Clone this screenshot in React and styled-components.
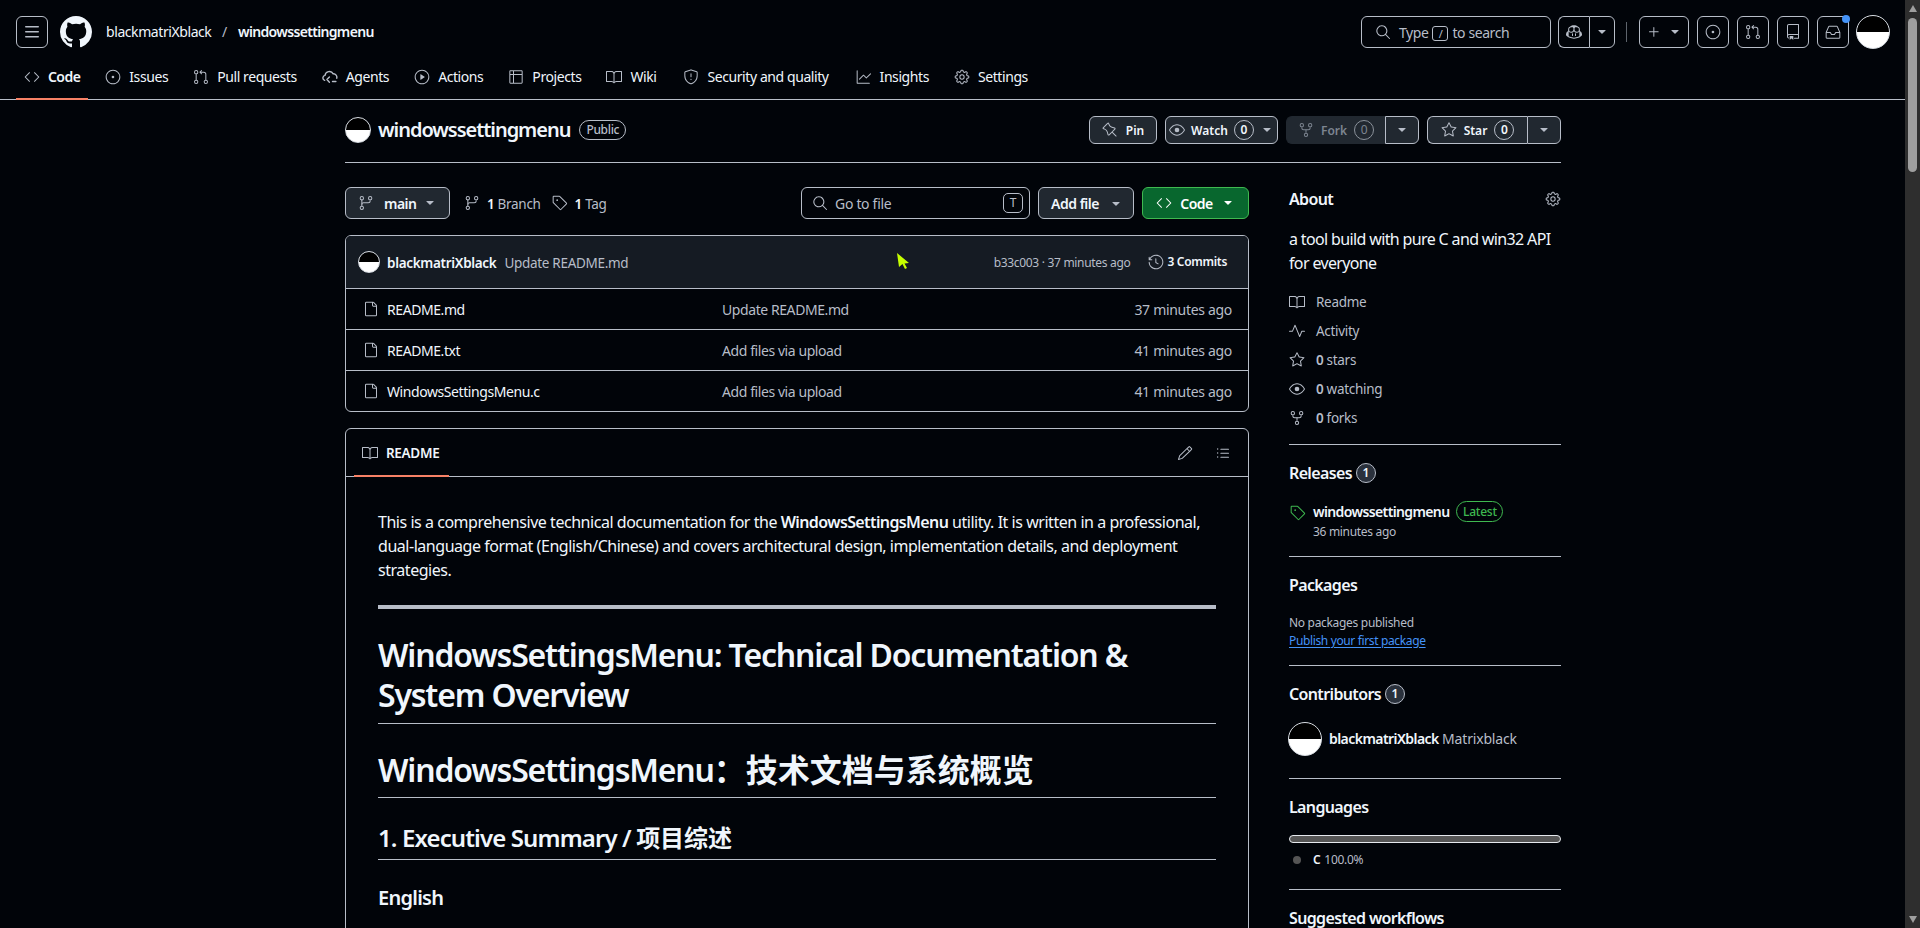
import React from 'react';
import styled, { createGlobalStyle } from 'styled-components';
import {
  GoCode, GoIssueOpened, GoGitPullRequest, GoPlay, GoTable, GoBook,
  GoShield, GoGraph, GoGear, GoSearch, GoCopilot, GoTriangleDown, GoPlus, GoRepo, GoInbox, GoPin,
  GoEye, GoRepoForked, GoStar, GoGitBranch, GoTag, GoHistory, GoFile, GoPencil, GoListUnordered, GoPulse,
} from 'react-icons/go';

const border = '#b7bdc8';
const text = '#f0f6fc';
const muted = '#b7bdc8';
const surface = '#212830';

const GlobalStyle = createGlobalStyle`
  html, body {
    margin: 0;
    height: 100%;
    overflow: hidden;
    background: #010409;
  }
  body {
    font-family: "Noto Sans", "Noto Sans CJK SC", sans-serif;
    font-size: 14px;
    line-height: 20px;
    letter-spacing: -0.022em;
    color: ${text};
  }
  svg { display: block; flex: none; }
`;

const Shell = styled.div`
  display: flex;
  height: 928px;
  overflow: hidden;
`;

const Page = styled.div`
  flex: 1;
  min-width: 0;
  overflow: hidden;
`;

const Scrollbar = styled.div`
  width: 15px;
  flex: none;
  background: #2e2e2e;
  display: flex;
  flex-direction: column;
  align-items: center;
  justify-content: space-between;
  padding: 5px 0;
  box-sizing: border-box;
  position: relative;
`;

const ScrollThumb = styled.div`
  position: absolute;
  top: 18px;
  left: 3px;
  width: 9px;
  height: 154px;
  border-radius: 5px;
  background: #9f9f9f;
`;

const ScrollArrow = styled.div`
  width: 0;
  height: 0;
  border-left: 4.5px solid transparent;
  border-right: 4.5px solid transparent;
  ${p => (p.$down ? 'border-top: 7px solid #9f9f9f;' : 'border-bottom: 7px solid #9f9f9f;')}
`;

const Cursor = styled.svg`
  position: absolute;
  left: 897px;
  top: 253px;
`;

const TopBar = styled.div`
  height: 64px;
  box-sizing: border-box;
  padding: 16px 15px 16px 16px;
  display: flex;
  align-items: center;
`;

const Crumbs = styled.div`
  display: flex;
  align-items: center;
  margin-left: 14px;
  flex: 1;
`;

const CrumbOwner = styled.span`
  width: 116px;
  letter-spacing: -0.03em;
`;

const CrumbSlash = styled.span`
  width: 16px;
  color: ${muted};
`;

const CrumbRepo = styled.span`
  font-weight: 600;
  letter-spacing: -0.048em;
`;

const LogoLink = styled.a`
  display: flex;
  margin-left: 12px;
  color: ${text};
`;

const IconBtn = styled.button`
  height: 32px;
  width: ${p => p.$w || 32}px;
  margin-left: ${p => p.$ml || 0}px;
  box-sizing: border-box;
  padding: 0;
  background: transparent;
  border: 1px solid ${border};
  border-radius: 6px;
  color: ${muted};
  display: flex;
  align-items: center;
  justify-content: center;
  gap: ${p => p.$gap || 0}px;
  position: relative;
  flex: none;
`;

const SearchBox = styled.div`
  width: 190px;
  height: 32px;
  box-sizing: border-box;
  border: 1px solid ${border};
  border-radius: 6px;
  color: ${muted};
  display: flex;
  align-items: center;
  padding-left: 13px;
  gap: 8px;
  flex: none;
`;

const SearchHint = styled.span`
  display: flex;
  align-items: center;
  gap: 4px;
  letter-spacing: -0.03em;
  padding-top: 2px;
`;

const SlashKey = styled.kbd`
  width: 16px;
  height: 15px;
  box-sizing: border-box;
  border: 1px solid ${border};
  border-radius: 3px;
  font: inherit;
  font-size: 11px;
  line-height: 13px;
  text-align: center;
`;

const SplitGroup = styled.div`
  display: flex;
  margin-left: ${p => p.$ml || 0}px;
  flex: none;
`;

const SplitPart = styled.button`
  height: ${p => p.$h || 32}px;
  width: ${p => p.$w}px;
  box-sizing: border-box;
  padding: 0;
  background: ${p => p.$bg || 'transparent'};
  border: 1px solid ${p => p.$borderColor || border};
  color: ${p => p.$color || muted};
  font: inherit;
  font-size: 12px;
  font-weight: 600;
  display: flex;
  align-items: center;
  justify-content: center;
  gap: 7px;
  &:first-child {
    border-radius: 6px 0 0 6px;
    border-right-width: 0;
  }
  &:last-child {
    border-radius: 0 6px 6px 0;
  }
`;

const Divider = styled.span`
  width: 1px;
  height: 20px;
  background: #5e646c;
  margin: 0 12px 0 11px;
  flex: none;
`;

const Dot = styled.span`
  position: absolute;
  top: -2px;
  right: -2px;
  width: 8px;
  height: 8px;
  border-radius: 50%;
  background: #4493f8;
`;

const Avatar = styled.span`
  display: block;
  width: ${p => p.$size}px;
  height: ${p => p.$size}px;
  box-sizing: border-box;
  border-radius: 50%;
  border: 1px solid #d8dde3;
  background: linear-gradient(#000 50%, #fff 50%);
  flex: none;
  margin-left: ${p => p.$ml || 0}px;
`;

const Nav = styled.nav`
  height: 36px;
  box-sizing: border-box;
  border-bottom: 1px solid ${border};
  padding-left: 16px;
  display: flex;
  gap: 9px;
`;

const Tab = styled.a`
  height: 35px;
  box-sizing: border-box;
  padding: 3px 8px 0;
  margin-left: ${p => p.$ml || 0}px;
  display: flex;
  align-items: flex-start;
  gap: 8px;
  color: ${text};
  font-weight: ${p => (p.$active ? 600 : 400)};
  letter-spacing: ${p => (p.$active ? '-0.04em' : '-0.03em')};
  position: relative;
  svg {
    color: ${muted};
    margin-top: 2px;
  }
  ${p => p.$active && `
    &::after {
      content: "";
      position: absolute;
      left: 0;
      right: 0;
      bottom: -1px;
      height: 2px;
      background: #f78166;
    }
  `}
`;

const Container = styled.main`
  width: 1216px;
  margin-left: 345px;
`;

const RepoHead = styled.div`
  height: 63px;
  box-sizing: border-box;
  padding-top: 16px;
  border-bottom: 1px solid ${border};
  display: flex;
  justify-content: space-between;
  align-items: flex-start;
`;

const RepoTitle = styled.div`
  display: flex;
  align-items: center;
  height: 28px;
`;

const RepoName = styled.strong`
  font-size: 20px;
  font-weight: 600;
  letter-spacing: -0.052em;
  margin-left: 7px;
`;

const PublicLabel = styled.span`
  margin-left: 9px;
  height: 20px;
  box-sizing: border-box;
  padding: 0 6px;
  border: 1px solid ${border};
  border-radius: 10px;
  font-size: 12px;
  line-height: 18px;
  font-weight: 500;
  color: ${muted};
`;

const RepoActions = styled.div`
  display: flex;
  gap: 8px;
`;

const ActionBtn = styled.button`
  height: 28px;
  width: ${p => p.$w}px;
  box-sizing: border-box;
  padding: 0;
  background: ${surface};
  border: 1px solid ${border};
  border-radius: 6px;
  color: ${text};
  font: inherit;
  font-size: 12px;
  font-weight: 600;
  display: flex;
  align-items: center;
  justify-content: center;
  gap: ${p => p.$gap || 6}px;
  svg { color: ${muted}; }
`;

const BtnLabel = styled.span`
  padding-top: 2px;
`;

const Counter = styled.span`
  min-width: 20px;
  height: 20px;
  box-sizing: border-box;
  border: 1px solid ${p => (p.$dim ? '#8b929b' : border)};
  border-radius: 10px;
  font-size: 12px;
  line-height: 18px;
  font-weight: ${p => (p.$dim ? 400 : 600)};
  letter-spacing: 0;
  text-align: center;
  color: inherit;
  background: ${p => (p.$fill ? '#2a313c' : 'transparent')};
  display: inline-block;
`;

const Columns = styled.div`
  display: grid;
  grid-template-columns: 904px 272px;
  column-gap: 40px;
  margin-top: 24px;
`;

const BranchRow = styled.div`
  display: flex;
  align-items: center;
  height: 32px;
`;

const BranchBtn = styled.button`
  width: 105px;
  height: 32px;
  box-sizing: border-box;
  background: ${surface};
  border: 1px solid ${border};
  border-radius: 6px;
  color: ${text};
  font: inherit;
  font-weight: 600;
  padding: 0 12px;
  display: flex;
  align-items: center;
  svg { color: ${muted}; }
`;

const BranchName = styled.span`
  margin-left: 10px;
  padding-top: 2px;
  flex: 1;
  text-align: left;
  letter-spacing: -0.04em;
`;

const MetaLink = styled.span`
  display: flex;
  align-items: center;
  color: ${muted};
  font-size: 13.5px;
  margin-left: ${p => p.$ml}px;
  gap: ${p => p.$gap}px;
  svg { color: ${muted}; }
  b { color: ${text}; font-weight: 600; }
`;

const Spacer = styled.span`
  flex: 1;
`;

const FileSearch = styled.div`
  width: 229px;
  height: 32px;
  box-sizing: border-box;
  border: 1px solid ${border};
  border-radius: 6px;
  color: ${muted};
  padding: 0 6px 0 10px;
  display: flex;
  align-items: center;
  gap: 7px;
`;

const KeyT = styled.kbd`
  margin-left: auto;
  width: 20px;
  height: 20px;
  box-sizing: border-box;
  border: 1px solid ${border};
  border-radius: 5px;
  font: inherit;
  font-size: 12px;
  line-height: 18px;
  text-align: center;
`;

const AddFile = styled.button`
  width: 96px;
  height: 32px;
  margin-left: 8px;
  box-sizing: border-box;
  background: ${surface};
  border: 1px solid ${border};
  border-radius: 6px;
  color: ${text};
  font: inherit;
  font-weight: 600;
  letter-spacing: -0.035em;
  padding: 0 0 0 2px;
  display: flex;
  align-items: center;
  justify-content: center;
  gap: 10px;
  svg { color: ${muted}; margin-top: 2px; }
`;

const CodeBtn = styled.button`
  width: 107px;
  height: 32px;
  margin-left: 8px;
  box-sizing: border-box;
  background: #08672e;
  border: 1px solid #3fb950;
  border-radius: 6px;
  color: #fff;
  font: inherit;
  font-weight: 600;
  letter-spacing: -0.04em;
  padding: 0;
  display: flex;
  align-items: center;
  justify-content: center;
  gap: 8px;
`;

const FilesBox = styled.div`
  margin-top: 16px;
  border: 1px solid ${border};
  border-radius: 6px;
  overflow: hidden;
`;

const CommitRow = styled.div`
  height: 53px;
  box-sizing: border-box;
  background: #151b23;
  border-bottom: 1px solid ${border};
  padding: 0 21px 0 12px;
  display: flex;
  align-items: center;
  gap: 5px;
  font-size: 13.5px;
`;

const CommitAuthor = styled.strong`
  font-weight: 600;
  margin-left: 2px;
  padding-top: 2px;
`;

const CommitMsg = styled.span`
  color: ${muted};
  margin-left: 3px;
  padding-top: 2px;
`;

const CommitMeta = styled.span`
  margin-left: auto;
  color: ${muted};
  font-size: 12px;
  padding-top: 2px;
`;

const CommitCount = styled.span`
  display: flex;
  align-items: center;
  gap: 4px;
  font-size: 12px;
  font-weight: 600;
  margin-left: 12px;
  svg { color: ${muted}; }
`;

const FileRow = styled.div`
  height: 40px;
  box-sizing: border-box;
  padding: 0 16px 0 17px;
  display: grid;
  grid-template-columns: 16px 343px 1fr auto;
  align-items: center;
  color: ${muted};
  & + & { border-top: 1px solid ${border}; height: 41px; }
  span { padding-top: 2px; }
`;

const FileName = styled.span`
  color: ${text};
  margin-left: 8px;
  letter-spacing: -0.03em;
`;

const FileCommit = styled.span`
  letter-spacing: -0.03em;
`;

const ReadmeBox = styled.section`
  margin-top: 16px;
  border: 1px solid ${border};
  border-radius: 6px;
`;

const ReadmeBar = styled.div`
  height: 48px;
  box-sizing: border-box;
  border-bottom: 1px solid ${border};
  padding: 0 17px 0 8px;
  display: flex;
  align-items: center;
  color: ${muted};
  gap: 22px;
`;

const ReadmeTab = styled.span`
  margin-right: auto;
  height: 47px;
  box-sizing: border-box;
  padding: 0 8px;
  display: flex;
  align-items: center;
  gap: 8px;
  color: ${text};
  font-weight: 600;
  font-size: 13.5px;
  position: relative;
  width: 95px;
  svg { color: ${muted}; }
  &::after {
    content: "";
    position: absolute;
    left: 0;
    right: 0;
    bottom: -1px;
    height: 2px;
    background: #f78166;
  }
`;

const Markdown = styled.article`
  padding: 33px 32px 32px;
  font-size: 16px;
  line-height: 24px;
  letter-spacing: -0.029em;
  strong { font-weight: 600; letter-spacing: -0.038em; }
  p { margin: 0 0 16px; }
  hr {
    height: 4px;
    margin: 23px 0 24px;
    border: 0;
    background: ${border};
  }
  h1, h2, h3 {
    font-weight: 600;
    margin: 24px 0 16px;
    letter-spacing: -0.037em;
  }
  h1 {
    font-size: 32px;
    line-height: 40px;
    padding: 2px 0 7.6px;
    border-bottom: 1px solid ${border};
  }
  h2 {
    font-size: 24px;
    line-height: 30px;
    padding: 1px 0 6.2px;
    border-bottom: 1px solid ${border};
  }
  h3 {
    font-size: 20px;
    line-height: 25px;
    padding-top: 1px;
  }
`;

const Cjk = styled.span`
  letter-spacing: 0;
`;

const Side = styled.aside`
  min-width: 0;
`;

const SideSection = styled.div`
  padding-top: ${p => (p.$first ? 0 : 16)}px;
  padding-bottom: ${p => p.$pb || 16}px;
  & + & { border-top: 1px solid ${border}; }
`;

const SideTitle = styled.h2`
  margin: 0;
  font-size: 16px;
  font-weight: 600;
  line-height: 24px;
  letter-spacing: -0.04em;
  display: flex;
  align-items: center;
  justify-content: space-between;
  svg { color: ${muted}; }
`;

const TitleRow = styled.div`
  display: flex;
  align-items: center;
  gap: 4px;
  font-size: 16px;
  font-weight: 600;
  line-height: 24px;
  letter-spacing: -0.04em;
`;

const Desc = styled.p`
  margin: 16px 0 17px;
  font-size: 16px;
  line-height: 24px;
  letter-spacing: -0.04em;
`;

const SideLinks = styled.div`
  display: flex;
  flex-direction: column;
  gap: 9px;
`;

const SideLink = styled.div`
  display: flex;
  align-items: center;
  gap: 11px;
  color: ${muted};
  font-size: 13.5px;
  height: 20px;
  b { font-weight: 600; }
`;

const ReleaseRow = styled.div`
  margin-top: 16px;
  display: grid;
  grid-template-columns: 24px auto;
  justify-content: start;
  svg { color: #3fb950; margin: 4px 0 0 1px; }
`;

const ReleaseTop = styled.div`
  display: flex;
  align-items: center;
  gap: 7px;
  height: 21px;
  font-weight: 600;
  letter-spacing: -0.045em;
`;

const LatestLabel = styled.span`
  height: 21px;
  width: 47px;
  box-sizing: border-box;
  border: 1px solid #3fb950;
  border-radius: 11px;
  color: #3fb950;
  font-size: 12px;
  line-height: 19px;
  font-weight: 500;
  letter-spacing: -0.02em;
  text-align: center;
`;

const Small = styled.div`
  color: ${muted};
  font-size: 12px;
  line-height: 18px;
  margin-top: ${p => p.$mt || 0}px;
`;

const BlueLink = styled.a`
  display: block;
  color: #4493f8;
  font-size: 12px;
  line-height: 18px;
  letter-spacing: -0.03em;
  width: max-content;
  text-decoration: underline;
  text-underline-offset: 2px;
`;

const ContributorRow = styled.div`
  margin: 16px 0 0 -1px;
  display: flex;
  align-items: center;
  gap: 7px;
  b { font-weight: 600; letter-spacing: -0.04em; }
  span { color: ${muted}; letter-spacing: -0.012em; }
`;

const LangBar = styled.div`
  margin-top: 16px;
  height: 8px;
  box-sizing: border-box;
  border: 1px solid #e6e9ee;
  border-radius: 4px;
  background: #555;
`;

const LangRow = styled.div`
  margin-top: 8px;
  height: 18px;
  display: flex;
  align-items: center;
  font-size: 12px;
  color: ${muted};
  padding-left: 4px;
  b { color: ${text}; font-weight: 600; margin: 0 4px 0 12px; }
`;

const LangDot = styled.span`
  width: 8px;
  height: 8px;
  border-radius: 50%;
  background: #555;
`;

const MenuIcon = () => (
  <svg width="16" height="16" viewBox="0 0 16 16" fill="currentColor">
    <path d="M1 2.75A.75.75 0 0 1 1.75 2h12.5a.75.75 0 0 1 0 1.5H1.75A.75.75 0 0 1 1 2.75Zm0 5A.75.75 0 0 1 1.75 7h12.5a.75.75 0 0 1 0 1.5H1.75A.75.75 0 0 1 1 7.75ZM1.75 12h12.5a.75.75 0 0 1 0 1.5H1.75a.75.75 0 0 1 0-1.5Z" />
  </svg>
);

const GithubMark = () => (
  <svg width="32" height="32" viewBox="0 0 16 16" fill="currentColor">
    <path d="M8 0c4.42 0 8 3.58 8 8a8.013 8.013 0 0 1-5.45 7.59c-.4.08-.55-.17-.55-.38 0-.27.01-1.13.01-2.2 0-.75-.25-1.23-.54-1.48 1.78-.2 3.65-.88 3.65-3.95 0-.88-.31-1.59-.82-2.15.08-.2.36-1.02-.08-2.12 0 0-.67-.22-2.2.82-.64-.18-1.32-.27-2-.27-.68 0-1.36.09-2 .27-1.53-1.03-2.2-.82-2.2-.82-.44 1.1-.16 1.92-.08 2.12-.51.56-.82 1.28-.82 2.15 0 3.06 1.86 3.75 3.64 3.95-.23.2-.44.55-.51 1.07-.46.21-1.61.55-2.33-.66-.15-.24-.6-.83-1.23-.82-.67.01-.27.38.01.53.34.19.73.9.82 1.13.16.45.68 1.31 2.69.94 0 .67.01 1.3.01 1.49 0 .21-.15.45-.55.38A7.995 7.995 0 0 1 0 8c0-4.42 3.58-8 8-8Z" />
  </svg>
);

// no agent glyph in the octicon set of react-icons, drawn by hand
const AgentIcon = () => (
  <svg width="16" height="16" viewBox="0 0 16 16" fill="none" stroke="currentColor" strokeWidth="1.4" strokeLinecap="round" strokeLinejoin="round">
    <path d="M2.6 11.4A2.6 2.6 0 0 1 3 6.4a4.4 4.4 0 0 1 8.2-1.6 3.4 3.4 0 0 1 3.5 4.4" />
    <path d="M7.4 8 4.9 10.6l2.5 2.6M10.5 12.5h3.4" />
  </svg>
);

const tabs = [
  { label: 'Code', icon: GoCode, active: true },
  { label: 'Issues', icon: GoIssueOpened },
  { label: 'Pull requests', icon: GoGitPullRequest },
  { label: 'Agents', icon: AgentIcon },
  { label: 'Actions', icon: GoPlay },
  { label: 'Projects', icon: GoTable },
  { label: 'Wiki', icon: GoBook },
  { label: 'Security and quality', icon: GoShield, ml: 2 },
  { label: 'Insights', icon: GoGraph, ml: 2 },
  { label: 'Settings', icon: GoGear },
];

const files = [
  { name: 'README.md', commit: 'Update README.md', time: '37 minutes ago' },
  { name: 'README.txt', commit: 'Add files via upload', time: '41 minutes ago' },
  { name: 'WindowsSettingsMenu.c', commit: 'Add files via upload', time: '41 minutes ago' },
];

export default function App() {
  return (
    <Shell>
      <GlobalStyle />
      <Page>
        <TopBar>
          <IconBtn><MenuIcon /></IconBtn>
          <LogoLink><GithubMark /></LogoLink>
          <Crumbs>
            <CrumbOwner>blackmatriXblack</CrumbOwner>
            <CrumbSlash>/</CrumbSlash>
            <CrumbRepo>windowssettingmenu</CrumbRepo>
          </Crumbs>
          <SearchBox>
            <GoSearch size={16} />
            <SearchHint>Type <SlashKey>/</SlashKey> to search</SearchHint>
          </SearchBox>
          <SplitGroup $ml={7}>
            <SplitPart $w={31}><GoCopilot size={16} /></SplitPart>
            <SplitPart $w={26}><GoTriangleDown size={14} /></SplitPart>
          </SplitGroup>
          <Divider />
          <IconBtn $w={50} $gap={6}><GoPlus size={16} /><GoTriangleDown size={14} /></IconBtn>
          <IconBtn $ml={8}><GoIssueOpened size={16} /></IconBtn>
          <IconBtn $ml={8}><GoGitPullRequest size={16} /></IconBtn>
          <IconBtn $ml={8}><GoRepo size={16} /></IconBtn>
          <IconBtn $ml={8}><GoInbox size={16} /><Dot /></IconBtn>
          <Avatar $size={34} $ml={7} />
        </TopBar>
        <Nav>
          {tabs.map(t => (
            <Tab key={t.label} $active={t.active} $ml={t.ml}><t.icon size={16} />{t.label}</Tab>
          ))}
        </Nav>
        <Container>
          <RepoHead>
            <RepoTitle>
              <Avatar $size={26} />
              <RepoName>windowssettingmenu</RepoName>
              <PublicLabel>Public</PublicLabel>
            </RepoTitle>
            <RepoActions>
              <ActionBtn $w={68} $gap={8}><GoPin size={16} /><BtnLabel>Pin</BtnLabel></ActionBtn>
              <ActionBtn $w={113}><GoEye size={16} /><BtnLabel>Watch</BtnLabel><Counter>0</Counter><GoTriangleDown size={14} /></ActionBtn>
              <SplitGroup>
                <SplitPart $h={28} $w={99} $bg={surface} $borderColor={surface} $color="#7d8590">
                  <GoRepoForked size={16} /><BtnLabel>Fork</BtnLabel><Counter $dim>0</Counter>
                </SplitPart>
                <SplitPart $h={28} $w={34} $bg={surface}><GoTriangleDown size={14} /></SplitPart>
              </SplitGroup>
              <SplitGroup>
                <SplitPart $h={28} $w={100} $bg={surface} $color={text}>
                  <GoStar size={16} color={muted} /><BtnLabel>Star</BtnLabel><Counter>0</Counter>
                </SplitPart>
                <SplitPart $h={28} $w={34} $bg={surface}><GoTriangleDown size={14} /></SplitPart>
              </SplitGroup>
            </RepoActions>
          </RepoHead>
          <Columns>
            <div>
              <BranchRow>
                <BranchBtn>
                  <GoGitBranch size={16} />
                  <BranchName>main</BranchName>
                  <GoTriangleDown size={14} />
                </BranchBtn>
                <MetaLink $ml={14} $gap={7}><GoGitBranch size={16} /><BtnLabel><b>1</b> Branch</BtnLabel></MetaLink>
                <MetaLink $ml={11} $gap={7}><GoTag size={16} /><BtnLabel><b>1</b> Tag</BtnLabel></MetaLink>
                <Spacer />
                <FileSearch>
                  <GoSearch size={16} />
                  <BtnLabel>Go to file</BtnLabel>
                  <KeyT>T</KeyT>
                </FileSearch>
                <AddFile><BtnLabel>Add file</BtnLabel><GoTriangleDown size={14} /></AddFile>
                <CodeBtn><GoCode size={16} /><BtnLabel>Code</BtnLabel><GoTriangleDown size={14} /></CodeBtn>
              </BranchRow>
              <FilesBox>
                <CommitRow>
                  <Avatar $size={22} />
                  <CommitAuthor>blackmatriXblack</CommitAuthor>
                  <CommitMsg>Update README.md</CommitMsg>
                  <CommitMeta>b33c003 · 37 minutes ago</CommitMeta>
                  <CommitCount><GoHistory size={16} />3 Commits</CommitCount>
                </CommitRow>
                {files.map(f => (
                  <FileRow key={f.name}>
                    <GoFile size={16} />
                    <FileName>{f.name}</FileName>
                    <FileCommit>{f.commit}</FileCommit>
                    <span>{f.time}</span>
                  </FileRow>
                ))}
              </FilesBox>
              <ReadmeBox>
                <ReadmeBar>
                  <ReadmeTab><GoBook size={16} />README</ReadmeTab>
                  <GoPencil size={16} />
                  <GoListUnordered size={16} />
                </ReadmeBar>
                <Markdown>
                  <p>
                    This is a comprehensive technical documentation for the <strong>WindowsSettingsMenu</strong> utility.
                    {' '}It is written in a professional, dual-language format (English/Chinese) and covers architectural
                    {' '}design, implementation details, and deployment strategies.
                  </p>
                  <hr />
                  <h1>WindowsSettingsMenu: Technical Documentation &amp; System Overview</h1>
                  <h1>WindowsSettingsMenu<Cjk>：技术文档与系统概览</Cjk></h1>
                  <h2>1. Executive Summary / <Cjk>项目综述</Cjk></h2>
                  <h3>English</h3>
                </Markdown>
              </ReadmeBox>
            </div>
            <Side>
              <SideSection $first>
                <SideTitle>About<GoGear size={16} /></SideTitle>
                <Desc>a tool build with pure C and win32 API for everyone</Desc>
                <SideLinks>
                  <SideLink><GoBook size={16} />Readme</SideLink>
                  <SideLink><GoPulse size={16} />Activity</SideLink>
                  <SideLink><GoStar size={16} /><span><b>0</b> stars</span></SideLink>
                  <SideLink><GoEye size={16} /><span><b>0</b> watching</span></SideLink>
                  <SideLink><GoRepoForked size={16} /><span><b>0</b> forks</span></SideLink>
                </SideLinks>
              </SideSection>
              <SideSection $pb={15}>
                <TitleRow>Releases<Counter $fill>1</Counter></TitleRow>
                <ReleaseRow>
                  <GoTag size={16} />
                  <div>
                    <ReleaseTop>windowssettingmenu<LatestLabel>Latest</LatestLabel></ReleaseTop>
                    <Small $mt={1}>36 minutes ago</Small>
                  </div>
                </ReleaseRow>
              </SideSection>
              <SideSection $pb={15}>
                <TitleRow>Packages</TitleRow>
                <Small $mt={17}>No packages published</Small>
                <BlueLink>Publish your first package</BlueLink>
              </SideSection>
              <SideSection $pb={22}>
                <TitleRow>Contributors<Counter $fill>1</Counter></TitleRow>
                <ContributorRow>
                  <Avatar $size={34} />
                  <div><b>blackmatriXblack</b> <span>Matrixblack</span></div>
                </ContributorRow>
              </SideSection>
              <SideSection $pb={20}>
                <TitleRow>Languages</TitleRow>
                <LangBar />
                <LangRow><LangDot /><b>C</b>100.0%</LangRow>
              </SideSection>
              <SideSection>
                <TitleRow>Suggested workflows</TitleRow>
              </SideSection>
            </Side>
          </Columns>
        </Container>
      </Page>
      <Scrollbar>
        <ScrollArrow />
        <ScrollThumb />
        <ScrollArrow $down />
      </Scrollbar>
      <Cursor width="13" height="16" viewBox="0 0 13 16">
        <path d="M0 0 12 10 7.5 10.5 10 15 8 16 5.5 11 2 14Z" fill="#c6ff00" />
      </Cursor>
    </Shell>
  );
}
